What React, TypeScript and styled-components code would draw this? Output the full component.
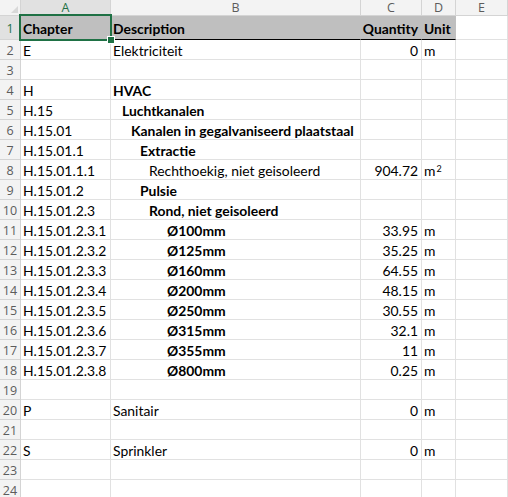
import React from "react";
import styled, { createGlobalStyle, css } from "styled-components";

const Global = createGlobalStyle`
  html, body { margin: 0; padding: 0; background: #fff; overflow: hidden; }
  * { box-sizing: border-box; }
`;

const GREEN = "#1f7145";
const GRID = "#e1e1e1";

const Sheet = styled.div`
  position: relative;
  display: grid;
  grid-template-columns: 21px 90px 250px 61px 34px 1fr;
  grid-template-rows: 16px 24px;
  grid-auto-rows: 20px;
  width: 508px;
  height: 497px;
  overflow: hidden;
  font-family: "Lato", "Carlito", sans-serif;
  font-size: 13.9px;
  color: #000;
`;

const Corner = styled.div`
  position: relative;
  background: #f3f3f3;
  border-right: 1px solid #d4d4d4;
  border-bottom: 1px solid #d4d4d4;
  &::after {
    content: "";
    position: absolute;
    right: 2px;
    bottom: 2px;
    border-left: 7px solid transparent;
    border-bottom: 7px solid #d8d8d8;
  }
`;

const ColHead = styled.div<{ $active?: boolean }>`
  display: flex;
  align-items: center;
  justify-content: center;
  font-family: "Open Sans", "Noto Sans", sans-serif;
  font-size: 12.5px;
  color: #5c5c5c;
  background: #f3f3f3;
  border-right: 1px solid #d4d4d4;
  border-bottom: 1px solid #d4d4d4;
  ${(p) =>
    p.$active &&
    css`
      background: #e1e1e1;
      color: ${GREEN};
      border-bottom: 1px solid ${GREEN};
    `}
`;

const RowHead = styled.div<{ $active?: boolean }>`
  display: flex;
  align-items: center;
  justify-content: center;
  font-family: "Open Sans", "Noto Sans", sans-serif;
  font-size: 12.5px;
  color: #5c5c5c;
  background: #f3f3f3;
  border-right: 1px solid #d4d4d4;
  border-bottom: 1px solid #d4d4d4;
  padding-top: 2px;
  ${(p) =>
    p.$active &&
    css`
      background: #e1e1e1;
      color: ${GREEN};
    `}
`;

const Cell = styled.div<{
  $head?: boolean;
  $bold?: boolean;
  $num?: boolean;
  $indent?: number;
  $last?: boolean;
}>`
  display: flex;
  align-items: center;
  justify-content: ${(p) => (p.$num ? "flex-end" : "flex-start")};
  padding: 2px ${(p) => (p.$num ? "3px" : "0")} 0
    ${(p) => (p.$num ? "0" : `${2 + (p.$indent || 0) * 9}px`)};
  white-space: nowrap;
  overflow: visible;
  font-weight: ${(p) => (p.$bold ? 700 : 400)};
  border-right: 1px solid ${GRID};
  border-bottom: 1px solid ${GRID};
  ${(p) =>
    p.$head &&
    css`
      background: #bfbfbf;
      border-right-color: #bfbfbf;
      border-bottom: 1px solid #000;
    `}
`;

const Sup = styled.span`
  font-size: 9px;
  align-self: flex-start;
  margin-top: 1px;
  margin-left: 1px;
`;

const Selection = styled.div`
  position: absolute;
  left: 19px;
  top: 14px;
  width: 93px;
  height: 27px;
  border: 2px solid ${GREEN};
  pointer-events: none;
  &::after {
    content: "";
    position: absolute;
    right: -5px;
    bottom: -5px;
    width: 6px;
    height: 6px;
    background: ${GREEN};
    border: 1px solid #fff;
  }
`;

type Row = {
  a?: string;
  b?: string;
  c?: string;
  d?: string;
  sup?: boolean;
  bold?: boolean;
  indent?: number;
};

const sizes: [string, string][] = [
  ["100", "33.95"],
  ["125", "35.25"],
  ["160", "64.55"],
  ["200", "48.15"],
  ["250", "30.55"],
  ["315", "32.1"],
  ["355", "11"],
  ["800", "0.25"],
];

const rows: Row[] = [
  { a: "E", b: "Elektriciteit", c: "0", d: "m" },
  {},
  { a: "H", b: "HVAC", bold: true, indent: 0 },
  { a: "H.15", b: "Luchtkanalen", bold: true, indent: 1 },
  { a: "H.15.01", b: "Kanalen in gegalvaniseerd plaatstaal", bold: true, indent: 2 },
  { a: "H.15.01.1", b: "Extractie", bold: true, indent: 3 },
  { a: "H.15.01.1.1", b: "Rechthoekig, niet geisoleerd", indent: 4, c: "904.72", d: "m", sup: true },
  { a: "H.15.01.2", b: "Pulsie", bold: true, indent: 3 },
  { a: "H.15.01.2.3", b: "Rond, niet geisoleerd", bold: true, indent: 4 },
  ...sizes.map(([s, q], i) => ({
    a: `H.15.01.2.3.${i + 1}`,
    b: `Ø${s}mm`,
    bold: true,
    indent: 6,
    c: q,
    d: "m",
  })),
  {},
  { a: "P", b: "Sanitair", c: "0", d: "m" },
  {},
  { a: "S", b: "Sprinkler", c: "0", d: "m" },
  {},
  {},
];

export default function App() {
  return (
    <>
      <Global />
      <Sheet>
        <Corner />
        <ColHead $active>A</ColHead>
        <ColHead>B</ColHead>
        <ColHead>C</ColHead>
        <ColHead>D</ColHead>
        <ColHead>E</ColHead>

        <RowHead $active>1</RowHead>
        <Cell $head $bold>Chapter</Cell>
        <Cell $head $bold>Description</Cell>
        <Cell $head $bold $num>Quantity</Cell>
        <Cell $head $bold>Unit</Cell>
        <Cell />

        {rows.map((r, i) => (
          <React.Fragment key={i}>
            <RowHead>{i + 2}</RowHead>
            <Cell>{r.a}</Cell>
            <Cell $bold={r.bold} $indent={r.indent}>{r.b}</Cell>
            <Cell $num>{r.c}</Cell>
            <Cell>
              {r.d}
              {r.sup && <Sup>2</Sup>}
            </Cell>
            <Cell />
          </React.Fragment>
        ))}
        <Selection />
      </Sheet>
    </>
  );
}
